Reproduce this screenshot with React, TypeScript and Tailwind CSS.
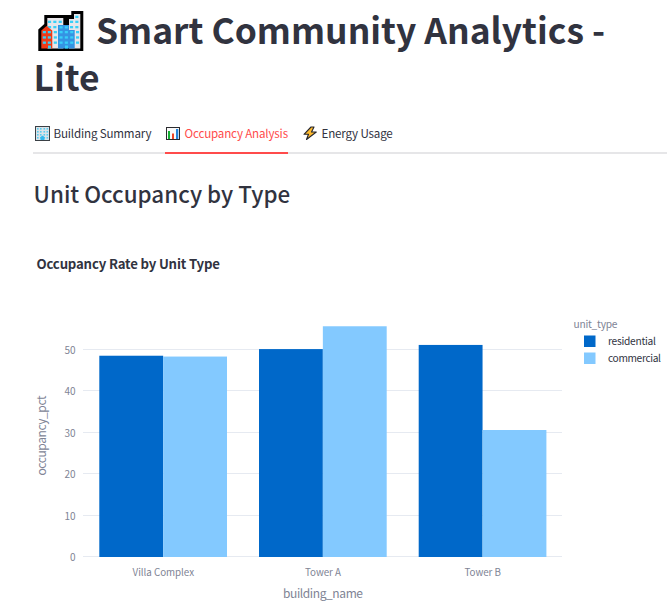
import type { ReactNode } from "react";

const FONT = "font-['Noto_Sans_CJK_SC','Open_Sans',sans-serif]";

const whiteWindows = [
  [10, 9.7], [15.3, 9.7], [20.7, 9.7], [15.3, 15], [10, 15],
  [32, 9.7], [37.3, 9.7], [37.3, 4.7], [37.3, 15], [32, 15],
  [15.8, 20], [15.8, 25.3], [15.8, 30.5],
  [38, 20], [38, 25.3], [38, 30.5],
];

function CityIcon() {
  const win = (x: number, y: number) => (
    <rect key={`${x}-${y}`} x={x} y={y} width="3.1" height="2.3" fill="#38d0f8" />
  );
  return (
    <svg className="block h-[42px] w-[46px]" viewBox="0 0 46 42">
      <path d="M0.3 40V18.500L6.300 13V4H33.300V0H45.300V40Z" fill="#000" />
      <path d="M9.300 7H25.300V37.500H9.300Z" fill="#e8e6ea" />
      <path d="M31 8H36V3H42.300V37.500H31Z" fill="#e8e6ea" />
      {whiteWindows.map(([x, y]) => win(x, y))}
      <path d="M3.300 19.500L8.500 15L14.300 19.500V37.500H3.300Z" fill="#f03a17" />
      <path d="M20 14H31V19H36.700V37.500H20Z" fill="#3593e3" />
      {[21.5, 26.8].map((x) => win(x, 15.2))}
      {[21.5, 26.8, 32.2].flatMap((x) => [20, 25.3, 30.5].map((y) => win(x, y)))}
      {[4.8, 9.8].flatMap((x) => [20, 25.3, 30.5].map((y) => win(x, y)))}
      <path d="M10 34.500H13V37.500H10ZM27 34.500H30V37.500H27Z" fill="#38d0f8" />
    </svg>
  );
}

function OfficeIcon() {
  return (
    <svg className="block h-[15px] w-[15px]" viewBox="0 0 15 15">
      <rect width="15" height="15" fill="#3a4045" />
      <rect x="1" y="1" width="13" height="13" fill="#dce3e8" />
      {[2, 5, 8.5, 11.5].flatMap((x) =>
        [2, 5, 8, 11].map((y) => <rect key={`${x}-${y}`} x={x} y={y} width="1.6" height="1.6" fill="#58cdf0" />),
      )}
      <path d="M5.500 14V11L7.500 9.500L9.500 11V14Z" fill="#35b8ed" />
    </svg>
  );
}

function ChartIcon() {
  return (
    <svg className="block h-[13px] w-[14px]" viewBox="0 0 14 13">
      <rect x="0.500" y="0.500" width="13" height="12" fill="#fafafa" stroke="#2b2b2f" />
      <rect x="2" y="4" width="2" height="8" fill="#16b135" />
      <rect x="6" y="6.500" width="2" height="5.500" fill="#ef4423" />
      <rect x="10" y="2" width="2.300" height="10" fill="#2484dc" />
    </svg>
  );
}

function BoltIcon() {
  return (
    <svg className="block h-[15px] w-[14px]" viewBox="0 0 14 15">
      <path d="M8 1L1 8.300H5.500L3.500 13.500L13.300 6H8.500L11 1Z" fill="#fdb92e" stroke="#26262b" strokeWidth="1.100" strokeLinejoin="round" />
    </svg>
  );
}

function Tab({ icon, label, active = false, className }: { icon: ReactNode; label: string; active?: boolean; className: string }) {
  return (
    <div className={`flex h-[30px] items-start border-b-2 ${active ? "border-[#ff4b4b] text-[#ff4b4b]" : "border-transparent text-[#31333f]"} ${className}`}>
      <span className="flex h-[19px] w-[18.5px] shrink-0 items-center">{icon}</span>
      <span className="whitespace-nowrap text-[11.6px] leading-[18px] tracking-[-0.17px]">{label}</span>
    </div>
  );
}

const groups = [
  { name: "Villa Complex", width: 61.5, x: 99.3, residential: 48.5, commercial: 48.3 },
  { name: "Tower A", width: 36, x: 259, residential: 50.1, commercial: 55.6 },
  { name: "Tower B", width: 36.5, x: 418.7, residential: 51.1, commercial: 30.6 },
];

const BASE = 557;
const UNIT = 4.15;

function OccupancyChart() {
  return (
    <svg className="block h-[372px] w-[667px]" viewBox="0 240 667 372">
      <text x="36.500" y="269" fontSize="13.200" fontWeight="700" fill="#31333f" textLength="183.500">Occupancy Rate by Unit Type</text>
      {[0, 10, 20, 30, 40, 50].map((tick) => (
        <g key={tick}>
          <rect x="83" y={Math.round(BASE - tick * UNIT) - 1} width="479" height="1" fill="#e6eaf1" />
          <text x="75.500" y={BASE - tick * UNIT + 4} fontSize="10" textAnchor="end" fill="#808495">{tick}</text>
        </g>
      ))}
      {groups.map((g) => (
        <g key={g.name}>
          <rect x={g.x} y={BASE - g.residential * UNIT} width="63.850" height={g.residential * UNIT} fill="#0068c9" />
          <rect x={g.x + 63.85} y={BASE - g.commercial * UNIT} width="63.850" height={g.commercial * UNIT} fill="#83c9ff" />
          <text x={g.x + 64} y="576" fontSize="9.800" textAnchor="middle" fill="#808495" textLength={g.width}>{g.name}</text>
        </g>
      ))}
      <text x="323" y="598" fontSize="12" textAnchor="middle" fill="#808495" textLength="80">building_name</text>
      <text transform="translate(46 435.500) rotate(-90)" fontSize="12" textAnchor="middle" fill="#808495" textLength="80">occupancy_pct</text>
      <text x="573.500" y="328" fontSize="10.200" fill="#808495" textLength="44">unit_type</text>
      <rect x="584" y="335.500" width="11.500" height="11.500" fill="#0068c9" />
      <rect x="584" y="352.500" width="11.500" height="11.500" fill="#83c9ff" />
      <text x="608" y="345" fontSize="10.200" fill="#31333f" textLength="48">residential</text>
      <text x="608" y="362" fontSize="10.200" fill="#31333f" textLength="53">commercial</text>
    </svg>
  );
}

export default function App() {
  return (
    <main className={`h-[612px] w-[667px] overflow-hidden bg-white text-[#31333f] ${FONT}`}>
      <h1 className="h-[124px] pl-[33px] pt-[5px] text-[35.4px] font-bold leading-[47px]">
        <span className="flex h-[47px] items-center whitespace-nowrap">
          <span className="mr-[12px] ml-[5px] pt-[6px]"><CityIcon /></span>
          Smart Community Analytics -
        </span>
        <span className="block pl-[0.5px]">Lite</span>
      </h1>
      <nav className="ml-[33px] flex h-[30px] bg-[linear-gradient(#e6e6e8,#e6e6e8)] bg-[length:100%_2px] bg-bottom bg-no-repeat">
        <Tab icon={<OfficeIcon />} label="Building Summary" className="w-[132px] pl-[2px]" />
        <Tab icon={<ChartIcon />} label="Occupancy Analysis" active className="w-[123px] pl-[1px]" />
        <Tab icon={<BoltIcon />} label="Energy Usage" className="ml-[15px] w-[90px]" />
      </nav>
      <h2 className="h-[86px] pl-[33.500px] pt-[21px] text-[22.400px] font-medium leading-[36px]">Unit Occupancy by Type</h2>
      <OccupancyChart />
    </main>
  );
}
